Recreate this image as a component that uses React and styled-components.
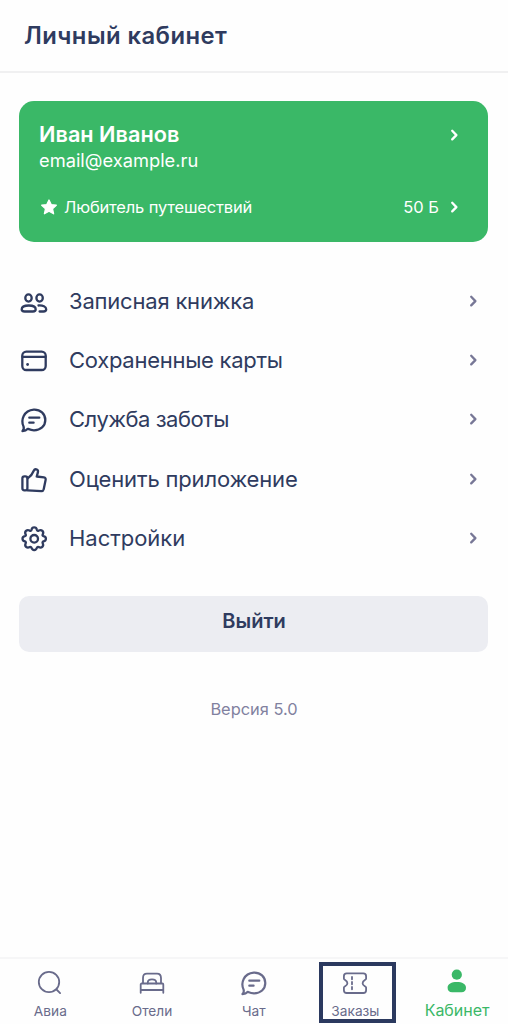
import React from 'react';
import styled, { createGlobalStyle } from 'styled-components';

const GlobalStyle = createGlobalStyle`
  * {
    box-sizing: border-box;
  }

  body {
    margin: 0;
    background: #fefefe;
    font-family: Inter, 'Liberation Sans', sans-serif;
    color: #2f3b5f;
  }
`

const Screen = styled.div`
  display: flex;
  flex-direction: column;
  height: 1024px;
  width: 508px;
  overflow: hidden;
`

const Header = styled.header`
  display: flex;
  align-items: center;
  flex: none;
  height: 73px;
  padding: 0 0 0 24px;
  border-bottom: 2px solid #f0f0f1;
`

const Title = styled.h1`
  margin: 0;
  font-size: 23.8px;
  font-weight: 600;
  line-height: 30px;
  letter-spacing: 0.45px;
  white-space: nowrap;
`

const Content = styled.main`
  display: flex;
  flex-direction: column;
  flex: 1;
  padding: 28px 20px 0 19px;
`

const Card = styled.section`
  display: flex;
  flex-direction: column;
  justify-content: space-between;
  height: 141px;
  padding: 20px 28px 23px 20px;
  border-radius: 15px;
  background: #3ab867;
  color: #fff;
`

const CardRow = styled.div`
  display: flex;
  align-items: center;
  justify-content: space-between;
`

const Name = styled.div`
  font-size: 21.7px;
  font-weight: 600;
  line-height: 27px;
`

const Text = styled.span`
  font-size: ${({ $size }) => $size}px;
  letter-spacing: ${({ $spacing }) => $spacing || 0}px;
  line-height: 24px;
  white-space: nowrap;
`

const Group = styled.div`
  display: flex;
  align-items: center;
  gap: ${({ $gap }) => $gap}px;
`

const Menu = styled.nav`
  display: flex;
  flex-direction: column;
  margin-top: 29px;
`

const MenuItem = styled.a`
  display: flex;
  align-items: center;
  height: 59.4px;
  padding: 0 9px 0 0;
`

const MenuIcon = styled.svg`
  flex: none;
  width: 30px;
  height: 30px;
  margin-top: 2px;
  fill: none;
  stroke: #2f3b5f;
  stroke-width: 2.3;
  stroke-linecap: round;
  stroke-linejoin: round;
`

const MenuLabel = styled.span`
  flex: 1;
  margin-left: 20px;
  font-size: 22px;
  line-height: 28px;
  letter-spacing: ${({ $spacing }) => $spacing}px;
  white-space: nowrap;
`

const Arrow = styled.svg`
  flex: none;
  width: 12px;
  height: 14px;
  fill: none;
  stroke: ${({ $color }) => $color};
  stroke-width: 2.3;
  stroke-linecap: round;
  stroke-linejoin: round;
`

const LogoutButton = styled.button`
  height: 56px;
  margin-top: 28px;
  padding: 0 0 5px 1px;
  border: 0;
  border-radius: 10px;
  background: #ecedf2;
  color: #2f3b5f;
  font-family: inherit;
  font-size: 20px;
  font-weight: 600;
`

const Version = styled.div`
  margin-top: 46px;
  padding-left: 1px;
  text-align: center;
  font-size: 16.4px;
  line-height: 22px;
  color: #81819f;
`

const TabBar = styled.nav`
  display: grid;
  grid-template-columns: repeat(5, 101.7px);
  flex: none;
  height: 67px;
  margin-left: -0.5px;
  border-top: 2px solid #f6f6f7;
`

const Tab = styled.a`
  position: relative;
  display: flex;
  flex-direction: column;
  align-items: center;
  padding-top: 9px;
  font-size: ${({ $active }) => ($active ? 16 : 13.7)}px;
  line-height: ${({ $active }) => ($active ? 18 : 20)}px;
  color: ${({ $active }) => ($active ? '#3ab867' : '#696b8b')};
`

const TabIcon = styled.svg`
  width: 30px;
  height: 30px;
  margin-bottom: 3px;
  fill: none;
  stroke: currentColor;
  stroke-width: ${({ $bold }) => ($bold ? 2.2 : 1.8)};
  stroke-linecap: round;
  stroke-linejoin: round;
`

const Highlight = styled.span`
  position: absolute;
  top: 3px;
  left: 14px;
  width: 77px;
  height: 61px;
  border: 4px solid #2b395f;
`

const Star = styled.svg`
  width: 18px;
  height: 18px;
  margin-left: 1px;
  fill: #fff;
  stroke: #fff;
  stroke-width: 1.3;
  stroke-linejoin: round;
`

const Chevron = ({ color }) => (
  <Arrow $color={color} viewBox="0 0 12 14">
    <path d="M4.200 2.800 8.400 7.100 4.200 11.400" />
  </Arrow>
)

const ChatShape = () => (
  <>
    <path d="M3.500 26.100c1.400-1.500 1.600-3 1-4.700C1.600 15 4.500 5.400 14.800 4.600 21.400 4.300 26.300 8.900 26.300 15c0 6.200-4.800 10.300-11.300 10.300-2.700 0-4.500-.8-6.200-1.500-1.400 1.500-3.300 2.200-5.300 2.300Z" />
    <path d="M10.300 12.700h10M10.300 17.700h4.300" />
  </>
)

const menu = [
  {
    label: 'Записная книжка',
    spacing: -0.2,
    icon: (
      <>
        <ellipse cx="9.500" cy="11" rx="3.200" ry="3.600" />
        <ellipse cx="20.600" cy="11" rx="3.200" ry="3.600" />
        <path d="M9.800 18.500c3.800 0 6.900 1.300 6.900 3.800 0 1.500-1 2.200-2.800 2.200H5.600c-1.800 0-2.900-.7-2.900-2.200 0-2.500 3.100-3.800 7.100-3.800Z" />
        <path d="M19.500 18.500c4.300-.3 7.700 1.200 7.700 3.800 0 1.500-1 2.200-2.800 2.200h-3.800" />
      </>
    ),
  },
  {
    label: 'Сохраненные карты',
    spacing: -0.28,
    icon: (
      <>
        <rect x="3.300" y="5.600" width="23.400" height="18.400" rx="4" />
        <path d="M3.500 10.900h23" />
        <circle cx="8.600" cy="18.500" r="1.400" fill="#2f3b5f" stroke="none" />
      </>
    ),
  },
  { label: 'Служба заботы', spacing: -0.5, icon: <ChatShape /> },
  {
    label: 'Оценить приложение',
    spacing: -0.17,
    icon: (
      <>
        <rect x="3.400" y="11.300" width="5" height="14" rx="2" />
        <path d="M8.700 13.400c3-2 5-4.900 6.200-7.900.8-2 4.300-1.500 4.100 1-.2 1.800-.8 3.300-1.300 5l7.300.9c1.400.2 1.900 1.200 1.600 2.500l-1.900 9.400c-.3 1.200-1 1.800-2.300 1.800l-14-.7" />
      </>
    ),
  },
  {
    label: 'Настройки',
    spacing: -0.03,
    icon: (
      <>
        <path d="M12.300 6.200c.6-3.200 4.800-3.200 5.400 0 .3.900 1 1.200 1.800.8 2.900-1.600 5.600 1.100 4 4-.4.700-.1 1.400.8 1.600 3.200.7 3.200 4.300 0 5.200-.9.300-1.200 1-.8 1.800 1.500 2.900-1.200 5.400-4 3.900-.8-.4-1.500-.2-1.800.7-.8 3-4.600 3-5.400 0-.3-.9-1-1.100-1.800-.7-2.800 1.500-5.500-1-4-3.900.4-.8.100-1.500-.8-1.800-3.200-.9-3.200-4.500 0-5.200.9-.2 1.200-.9.800-1.600-1.600-2.900 1.100-5.600 4-4 .8.400 1.500.1 1.800-.8Z" transform="translate(.2 -.4)" />
        <circle cx="15.200" cy="14.800" r="3.800" />
      </>
    ),
  },
]

const tabs = [
  {
    label: 'Авиа',
    icon: (
      <>
        <circle cx="14" cy="14" r="10.200" />
        <path d="m21.500 21.500 3.600 3.600" />
      </>
    ),
  },
  {
    label: 'Отели',
    icon: (
      <>
        <path d="M3.700 24.800V16.500a1 1 0 0 1 1-1h20.600a1 1 0 0 1 1 1v8.300M3.700 22h22.600M6 15.500V10c0-3 1.300-4.400 4-4.400h10c2.700 0 4 1.400 4 4.400v5.500" />
        <path d="M10.800 15.500v-1.200c0-1.900 1.900-2.900 4.200-2.900s4.200 1 4.200 2.900v1.200" />
      </>
    ),
  },
  { label: 'Чат', bold: true, icon: <ChatShape /> },
  {
    label: 'Заказы',
    highlighted: true,
    icon: (
      <>
        <path d="M6.700 5.400h16.600c1.900 0 2.800 1 2.800 2.800v2.600c0 1.200-3.500 1.600-3.500 4.400s3.500 3.200 3.500 4.400v2.600c0 1.800-.9 2.800-2.800 2.800H6.700c-1.900 0-2.800-1-2.800-2.800v-2.600c0-1.200 3.500-1.600 3.500-4.400s-3.500-3.200-3.500-4.400V8.200c0-1.800.9-2.800 2.800-2.800Z" />
        <path d="M12 9v2.300M12 14v2.300M12 19v2.300" />
      </>
    ),
  },
  {
    label: 'Кабинет',
    active: true,
    icon: (
      <g fill="currentColor" stroke="none">
        <circle cx="14.800" cy="6.700" r="5.100" />
        <path d="M14.800 14.100c5.300 0 9.200 1.900 9.200 5.700 0 2.800-1.600 4.500-4.500 4.500h-9.400c-2.900 0-4.500-1.700-4.500-4.500 0-3.800 3.900-5.700 9.200-5.700Z" />
      </g>
    ),
  },
]

export default function App() {
  return (
    <>
      <GlobalStyle />
      <Screen>
        <Header>
          <Title>Личный кабинет</Title>
        </Header>
        <Content>
          <Card>
            <div>
              <CardRow>
                <Name>Иван Иванов</Name>
                <Chevron color="#fff" />
              </CardRow>
              <Text $size={18.3}>email@example.ru</Text>
            </div>
            <CardRow>
              <Group $gap={6}>
                <Star viewBox="0 0 18 18">
                  <path d="m9 2 2.200 4.600 5.100.6-3.800 3.500 1.100 5.100L9 13.200l-4.600 2.600 1.100-5.100-3.800-3.500 5.100-.6Z" />
                </Star>
                <Text $size={16.5} $spacing={-0.17}>Любитель путешествий</Text>
              </Group>
              <Group $gap={9}>
                <Text $size={16.5}>50 Б</Text>
                <Chevron color="#fff" />
              </Group>
            </CardRow>
          </Card>
          <Menu>
            {menu.map(({ label, spacing, icon }) => (
              <MenuItem key={label}>
                <MenuIcon viewBox="0 0 30 30">{icon}</MenuIcon>
                <MenuLabel $spacing={spacing}>{label}</MenuLabel>
                <Chevron color="#777796" />
              </MenuItem>
            ))}
          </Menu>
          <LogoutButton>Выйти</LogoutButton>
          <Version>Версия 5.0</Version>
        </Content>
        <TabBar>
          {tabs.map(({ label, icon, active, bold, highlighted }) => (
            <Tab key={label} $active={active}>
              <TabIcon viewBox="0 0 30 30" $bold={bold}>{icon}</TabIcon>
              {label}
              {highlighted && <Highlight />}
            </Tab>
          ))}
        </TabBar>
      </Screen>
    </>
  )
}
